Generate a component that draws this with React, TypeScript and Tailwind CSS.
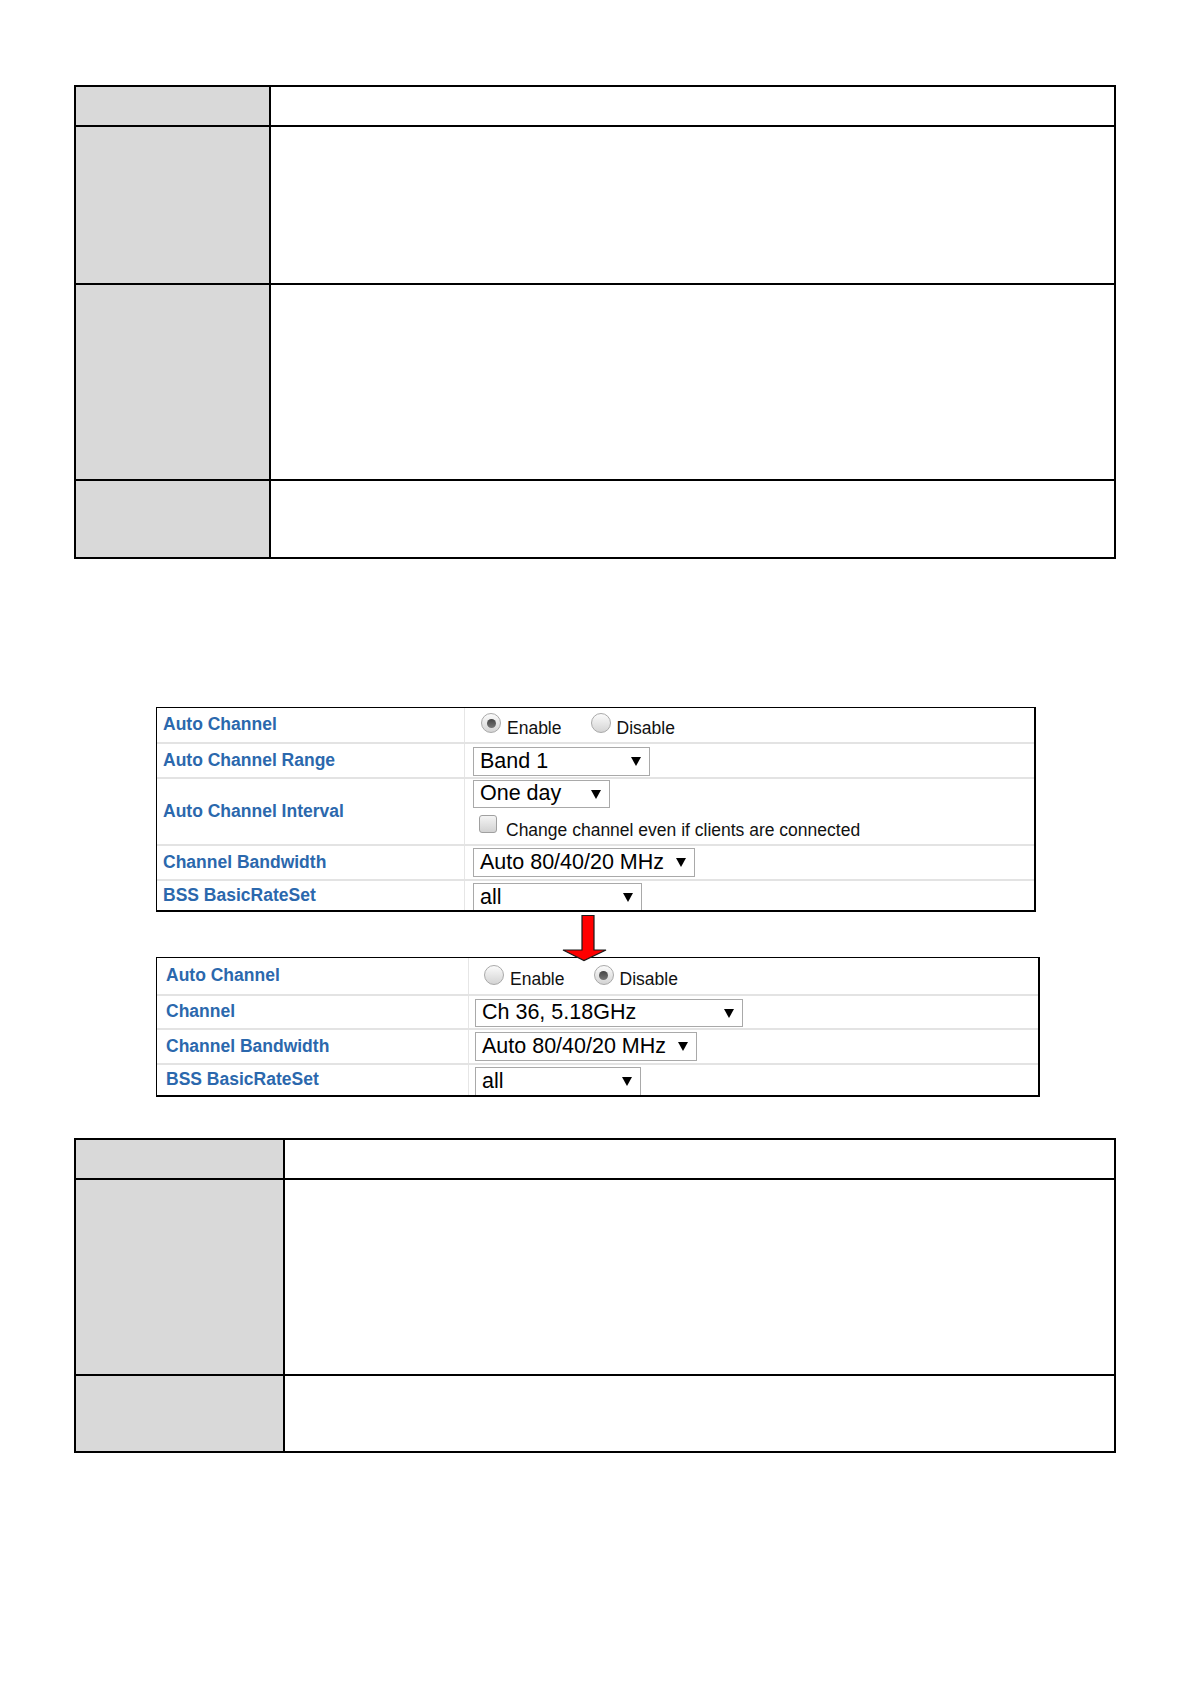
import React from "react";

const font = { fontFamily: '"Liberation Sans", Arial, sans-serif' };

function Radio({ checked }: { checked?: boolean }) {
  return (
    <span className="relative inline-block w-[20px] h-[20px] rounded-full border border-[#a9a9a9] bg-linear-to-b from-[#fbfbfb] to-[#d4d4d4] shrink-0">
      {checked && (
        <span className="absolute left-[4.5px] top-[4.5px] w-[9px] h-[9px] rounded-full bg-linear-to-b from-[#444] to-[#777]" />
      )}
    </span>
  );
}

function Checkbox() {
  return (
    <span className="inline-block w-[18px] h-[18px] rounded-[3px] border border-[#a0a0a0] bg-linear-to-b from-[#f4f4f4] to-[#d2d2d2] shrink-0" />
  );
}

function Select({ text, w, h = 29 }: { text: string; w: string; h?: number }) {
  return (
    <div
      className={`${w} flex items-center justify-between border border-[#a9a9a9] bg-white pl-[6px] pr-[8px] text-[21.5px] leading-none text-black shrink-0`}
      style={{ height: h }}
    >
      <span>{text}</span>
      <svg width="10" height="9" viewBox="0 0 10 9">
        <polygon points="0,0 10,0 5,9" fill="#000" />
      </svg>
    </div>
  );
}

function Label({ children, pl }: { children: React.ReactNode; pl: string }) {
  return (
    <div className={`flex items-center ${pl} text-[17.5px] font-bold text-[#2b68ad] leading-none`}>
      {children}
    </div>
  );
}

function RadioPair({ enabled, mb, gap }: { enabled: boolean; mb: string; gap: string }) {
  return (
    <>
      <div className="flex items-center">
        <span className={`${mb} flex`}>
          <Radio checked={enabled} />
        </span>
        <span className="ml-[6px]">Enable</span>
      </div>
      <div className={`flex items-center ${gap}`}>
        <span className={`${mb} flex`}>
          <Radio checked={!enabled} />
        </span>
        <span className="ml-[6px]">Disable</span>
      </div>
    </>
  );
}

function DocTable({ rows, labelW }: { rows: string[]; labelW: string }) {
  return (
    <div className="ml-[74px] w-[1042px] border-2 border-black flex flex-col">
      {rows.map((h, i) => (
        <div key={i} className={`flex ${h} ${i > 0 ? "border-t-2 border-black" : ""}`}>
          <div className={`${labelW} bg-[#d9d9d9] shrink-0`} />
          <div className="flex-1 border-l-2 border-black" />
        </div>
      ))}
    </div>
  );
}

export default function App() {
  return (
    <div className="w-[1191px] min-h-[1684px] bg-white pt-[85px]" style={font}>
      <DocTable rows={["h-[38px]", "h-[158px]", "h-[196px]", "h-[78px]"]} labelW="w-[193px]" />

      {/* Screenshot 1 */}
      <div className="mt-[148px] ml-[156px] w-[880px] border-t border-l border-black border-r-2 border-b-2 flex flex-col">
        <div className="flex h-[34px]">
          <div className="w-[308px] border-r border-[#e6e6e6] flex">
            <Label pl="pl-[6px]">Auto Channel</Label>
          </div>
          <div className="flex items-center pl-[16px] pt-[6px] text-[17.5px] text-[#111]">
            <RadioPair enabled mb="mb-[10px]" gap="ml-[29px]" />
          </div>
        </div>
        <div className="flex h-[35px] border-t-2 border-[#e3e3e3]">
          <div className="w-[308px] border-r border-[#e6e6e6] flex">
            <Label pl="pl-[6px]">Auto Channel Range</Label>
          </div>
          <div className="pl-[8px] pt-[3px]">
            <Select text="Band 1" w="w-[177px]" />
          </div>
        </div>
        <div className="flex h-[67px] border-t-2 border-[#e3e3e3]">
          <div className="w-[308px] border-r border-[#e6e6e6] flex">
            <Label pl="pl-[6px]">Auto Channel Interval</Label>
          </div>
          <div className="pl-[8px] pt-[1px] flex flex-col">
            <Select text="One day" w="w-[137px]" h={28} />
            <div className="flex items-center mt-[6px] pl-[6px] text-[17.5px] text-[#111]">
              <span className="mb-[3px]">
                <Checkbox />
              </span>
              <span className="ml-[9px] mt-[4px] leading-none">Change channel even if clients are connected</span>
            </div>
          </div>
        </div>
        <div className="flex h-[35px] border-t-2 border-[#e3e3e3]">
          <div className="w-[308px] border-r border-[#e6e6e6] flex">
            <Label pl="pl-[6px]">Channel Bandwidth</Label>
          </div>
          <div className="pl-[8px] pt-[2px]">
            <Select text="Auto 80/40/20 MHz" w="w-[222px]" />
          </div>
        </div>
        <div className="flex h-[31px] border-t-2 border-[#e3e3e3] overflow-hidden">
          <div className="w-[308px] border-r border-[#e6e6e6] flex">
            <Label pl="pl-[6px]">BSS BasicRateSet</Label>
          </div>
          <div className="pl-[8px] pt-[2px]">
            <Select text="all" w="w-[169px]" />
          </div>
        </div>
      </div>

      {/* Arrow gap */}
      <div className="relative h-[45px]">
        <svg className="absolute left-[560px] top-[2px] z-10" width="50" height="50" viewBox="0 0 50 50">
          <path d="M22,1.5 H34 V36 H46 L24,46.5 L3,36 H22 Z" fill="#ff0000" stroke="#1a1a1a" strokeWidth="1.2" strokeLinejoin="miter" />
        </svg>
      </div>

      {/* Screenshot 2 */}
      <div className="ml-[156px] w-[884px] border-t border-l border-black border-r-2 border-b-2 flex flex-col">
        <div className="flex h-[36px]">
          <div className="w-[312px] border-r border-[#e6e6e6] flex">
            <Label pl="pl-[9px]">Auto Channel</Label>
          </div>
          <div className="flex items-center pl-[15px] pt-[6px] text-[17.5px] text-[#111]">
            <RadioPair enabled={false} mb="mb-[8px]" gap="ml-[29px]" />
          </div>
        </div>
        <div className="flex h-[34px] border-t-2 border-[#e3e3e3]">
          <div className="w-[312px] border-r border-[#e6e6e6] flex">
            <Label pl="pl-[9px]">Channel</Label>
          </div>
          <div className="pl-[6px] pt-[3px]">
            <Select text="Ch 36, 5.18GHz" w="w-[268px]" h={28} />
          </div>
        </div>
        <div className="flex h-[35px] border-t-2 border-[#e3e3e3]">
          <div className="w-[312px] border-r border-[#e6e6e6] flex">
            <Label pl="pl-[9px]">Channel Bandwidth</Label>
          </div>
          <div className="pl-[6px] pt-[2px]">
            <Select text="Auto 80/40/20 MHz" w="w-[222px]" />
          </div>
        </div>
        <div className="flex h-[32px] border-t-2 border-[#e3e3e3] overflow-hidden">
          <div className="w-[312px] border-r border-[#e6e6e6] flex">
            <Label pl="pl-[9px]">BSS BasicRateSet</Label>
          </div>
          <div className="pl-[6px] pt-[2px]">
            <Select text="all" w="w-[166px]" />
          </div>
        </div>
      </div>

      <div className="mt-[41px]">
        <DocTable rows={["h-[38px]", "h-[196px]", "h-[77px]"]} labelW="w-[207px]" />
      </div>
    </div>
  );
}
